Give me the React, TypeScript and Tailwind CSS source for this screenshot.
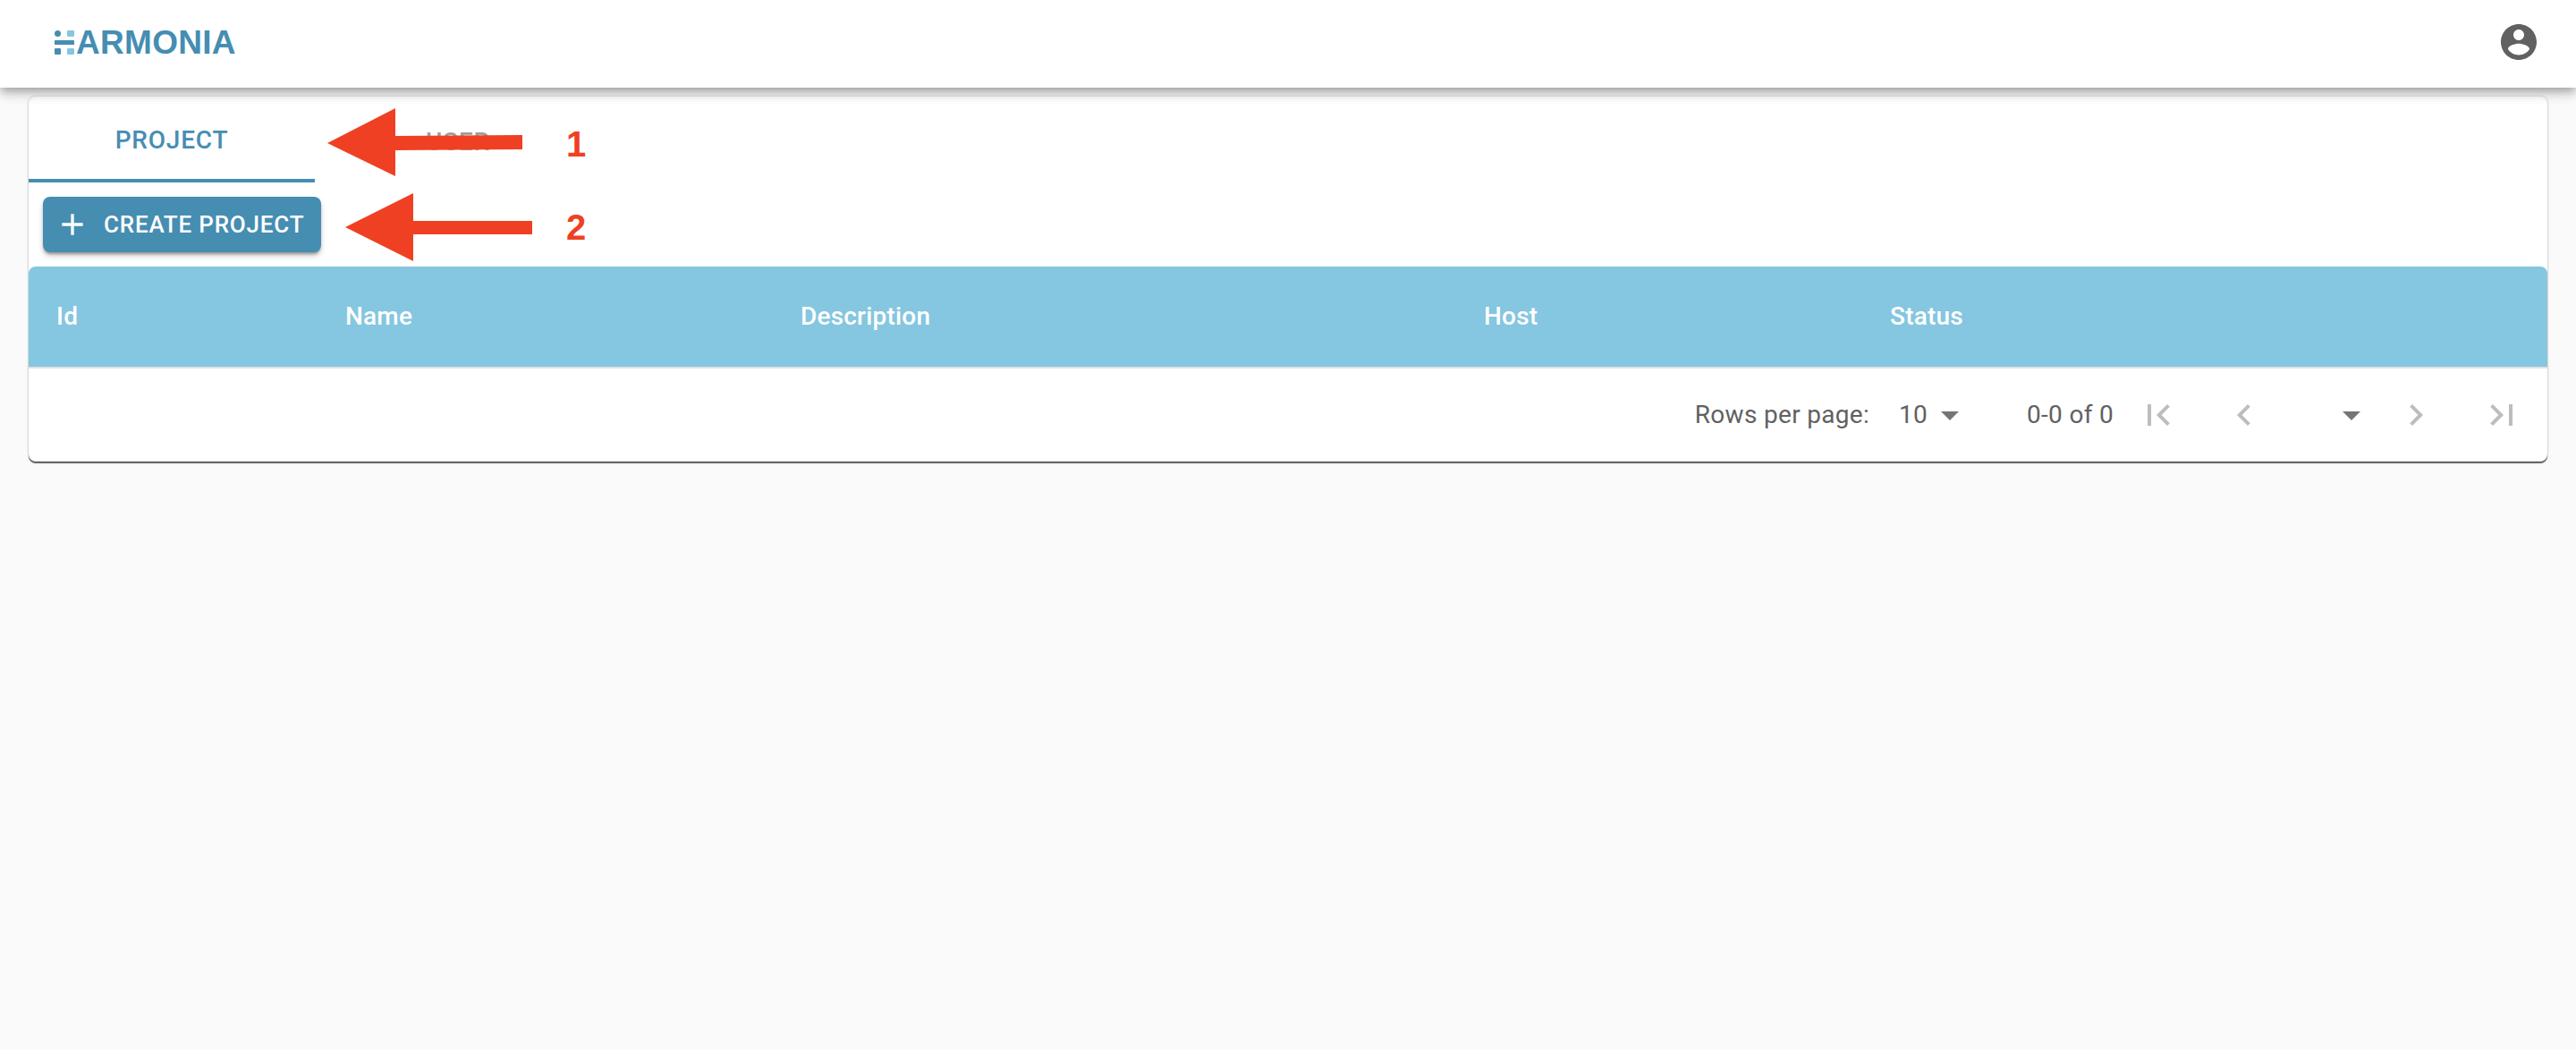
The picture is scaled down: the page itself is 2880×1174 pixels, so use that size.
const first = "M18.41 16.59L13.82 12l4.59-4.59L17 6l-6 6 6 6zM6 6h2v12H6z";
const prev = "M15.41 7.41L14 6l-6 6 6 6 1.41-1.41L10.83 12z";
const next = "M10 6L8.59 7.41 13.17 12l-4.58 4.59L10 18l6-6z";
const last = "M5.59 7.41L10.18 12l-4.59 4.59L7 18l6-6-6-6zM16 6h2v12h-2z";
const caret = "M7 10l5 5 5-5z";

function Icon({ d, className }: { d: string; className: string }) {
  return (
    <svg viewBox="0 0 24 24" className={className} fill="currentColor">
      <path d={d} />
    </svg>
  );
}

function Logo() {
  return (
    <div className="flex items-center gap-[2px] text-[#468db2] -mt-[4px]">
      <svg viewBox="0 0 22 27" className="w-[22px] h-[27px]">
        <circle cx="3.5" cy="3.5" r="3.5" fill="#468db2" />
        <rect x="14" y="0" width="8" height="7" rx="1" fill="#85c6e0" />
        <rect x="0" y="11" width="22" height="5" rx="0.5" fill="#468db2" />
        <rect x="0" y="20" width="7" height="7" rx="1" fill="#468db2" />
        <rect x="14" y="20" width="8" height="7" rx="1" fill="#85c6e0" />
      </svg>
      <span className="font-['Liberation_Sans',Arial,sans-serif] font-bold text-[37px] leading-none tracking-[0.3px]">ARMONIA</span>
    </div>
  );
}

function Annotations() {
  return (
    <>
      <svg className="absolute left-0 top-0 w-[700px] h-[300px] pointer-events-none" viewBox="0 0 700 300">
        <polygon points="366,160 442,121 442,152 584,151 584,167 442,168 442,197" fill="#ef4023" />
        <polygon points="386,254 462,216 462,247 595,247 595,262 462,262 462,292" fill="#ef4023" />
      </svg>
      <span className="absolute left-[633px] top-[141px] text-[40px] leading-[40px] font-bold text-[#ef4023] font-['Liberation_Sans',Arial,sans-serif]">1</span>
      <span className="absolute left-[633px] top-[234px] text-[40px] leading-[40px] font-bold text-[#ef4023] font-['Liberation_Sans',Arial,sans-serif]">2</span>
    </>
  );
}

export default function App() {
  return (
    <div className="relative min-h-screen bg-[#fafafa] font-['Roboto',sans-serif]">
      <header className="relative z-10 h-[98px] bg-white flex items-center justify-between pl-[61px] pr-[40px] shadow-[0_4px_8px_-2px_rgba(0,0,0,0.2),0_8px_10px_0_rgba(0,0,0,0.14),0_2px_20px_0_rgba(0,0,0,0.12)]">
        <Logo />
        <svg viewBox="0 0 24 24" className="w-12 h-12 text-[#616161] -mt-[4px]" fill="currentColor">
          <path d="M12 2C6.48 2 2 6.48 2 12s4.48 10 10 10 10-4.48 10-10S17.52 2 12 2zm0 3c1.66 0 3 1.34 3 3s-1.34 3-3 3-3-1.34-3-3 1.34-3 3-3zm0 14.2c-2.5 0-4.71-1.28-6-3.22.03-1.99 4-3.08 6-3.08 1.99 0 5.97 1.09 6 3.08-1.29 1.94-3.5 3.22-6 3.22z" />
        </svg>
      </header>

      <main className="px-8 pt-[10px]">
        <div className="bg-white rounded-lg shadow-[0_2px_1px_0_rgba(0,0,0,0.62),0_0_3px_0_rgba(0,0,0,0.22)]">
          <div className="flex h-[96px]">
            <div className="w-[320px] h-full flex items-center justify-center border-b-4 border-[#468db2] text-[#468db2] text-[28px] font-medium tracking-[0.8px] pt-[6px]">
              PROJECT
            </div>
            <div className="w-[320px] h-full flex items-center justify-center text-[#9e9e9e] text-[28px] font-medium tracking-[0.8px] pt-[6px]">
              USER
            </div>
          </div>

          <div className="pl-4 pt-4 pb-4">
            <button className="w-[311px] h-[62px] flex items-center gap-[15px] pl-[13px] rounded-lg bg-[#468db2] text-white text-[26px] font-medium tracking-[0.8px] shadow-[0_3px_3px_-1px_rgba(0,0,0,0.3),0_4px_6px_0_rgba(0,0,0,0.2)]">
              <Icon d="M19 13h-6v6h-2v-6H5v-2h6V5h2v6h6v2z" className="w-10 h-10 shrink-0" />
              <span>CREATE PROJECT</span>
            </button>
          </div>

          <div className="grid grid-cols-[323px_509px_764px_454px_1fr] items-center h-[114px] pl-[31px] bg-[#85c6e0] border-b-2 border-[#e0e0e0] rounded-t-lg text-white text-[28px] font-medium tracking-[0.2px]">
            <div>Id</div>
            <div>Name</div>
            <div>Description</div>
            <div>Host</div>
            <div>Status</div>
          </div>

          <div className="h-[104px] flex items-center justify-end text-[#616161] text-[28px] tracking-[0.3px] pr-[27px]">
            <span>Rows per page:</span>
            <span className="ml-[33px]">10</span>
            <Icon d={caret} className="w-12 h-12 text-[#757575] ml-[1px]" />
            <span className="ml-[62px]">0-0 of 0</span>
            <div className="flex items-center text-[#bdbdbd] ml-[27px]">
              <Icon d={first} className="w-12 h-12 -ml-[1px]" />
              <Icon d={prev} className="w-12 h-12 ml-[48px]" />
              <Icon d={caret} className="w-12 h-12 text-[#757575] ml-[72px]" />
              <Icon d={next} className="w-12 h-12 ml-[24px]" />
              <Icon d={last} className="w-12 h-12 ml-[48px]" />
            </div>
          </div>
        </div>
      </main>

      <Annotations />
    </div>
  );
}
